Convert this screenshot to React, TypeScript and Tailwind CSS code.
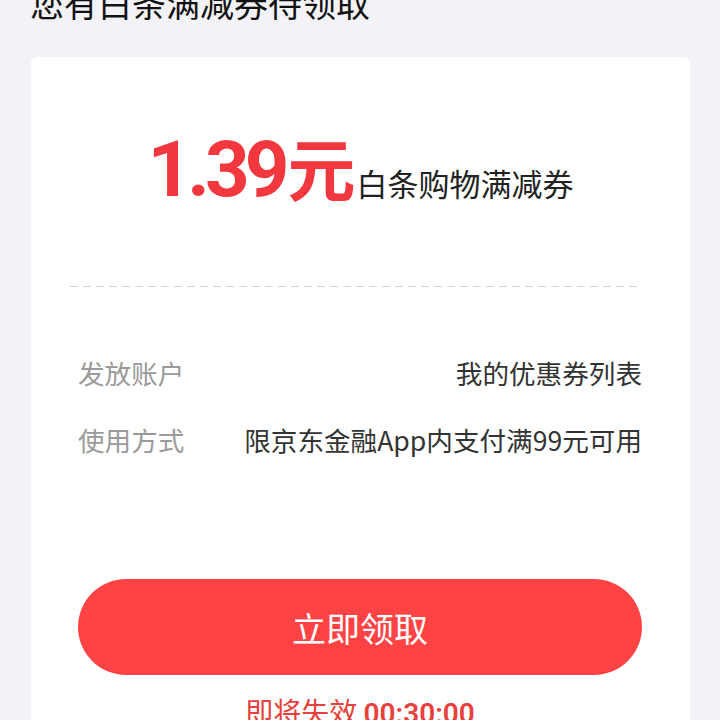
import React from "react";

export default function App() {
  const cjk = { fontFamily: '"Noto Sans CJK SC", "Noto Sans", sans-serif' };
  return (
    <div className="w-[720px] h-[720px] overflow-hidden bg-[#f2f2f7]" style={cjk}>
      <div className="mt-[-14px] pl-[30px] text-[34px] leading-[34px] text-[#111]">您有白条满减券待领取</div>
      <div className="mt-[37px] ml-[31px] mr-[30px] h-[700px] rounded-[6px] bg-white">
        <div className="flex items-baseline justify-center pt-[60px]">
          <span className="text-[78px] leading-[100px] font-bold tracking-[-5px] text-[#f2383e]" style={{ fontFamily: 'Roboto, "Noto Sans CJK SC", sans-serif' }}>1.39</span>
          <span className="ml-[3px] text-[68px] leading-[100px] font-bold text-[#f2383e]">元</span>
          <span className="ml-[1px] text-[31px] leading-[40px] text-[#222]">白条购物满减券</span>
        </div>
        <div className="mt-[66px] ml-[39px] mr-[48px] h-[1px] bg-[repeating-linear-gradient(to_right,#d4d4d4_0_8px,transparent_8px_13px)]" />
        <div className="pl-[47px] pr-[48px] pt-[66px]">
          <div className="flex justify-between items-center h-[40px] text-[26.6px]">
            <span className="text-[#9a9a9a]">发放账户</span>
            <span className="text-[#333]">我的优惠券列表</span>
          </div>
          <div className="mt-[27px] flex justify-between items-center h-[40px] text-[26.6px]">
            <span className="text-[#9a9a9a]">使用方式</span>
            <span className="text-[#333]">限京东金融App内支付满99元可用</span>
          </div>
          <div className="mt-[119px] flex h-[96px] items-center justify-center rounded-full bg-[#ff4344] text-[34px] text-white">立即领取</div>
          <div className="mt-[16px] text-center text-[28px] leading-[40px] text-[#e8403c]">
            即将失效 <span className="font-semibold" style={{ fontFamily: 'Roboto, sans-serif' }}>00:30:00</span>
          </div>
        </div>
      </div>
    </div>
  );
}
